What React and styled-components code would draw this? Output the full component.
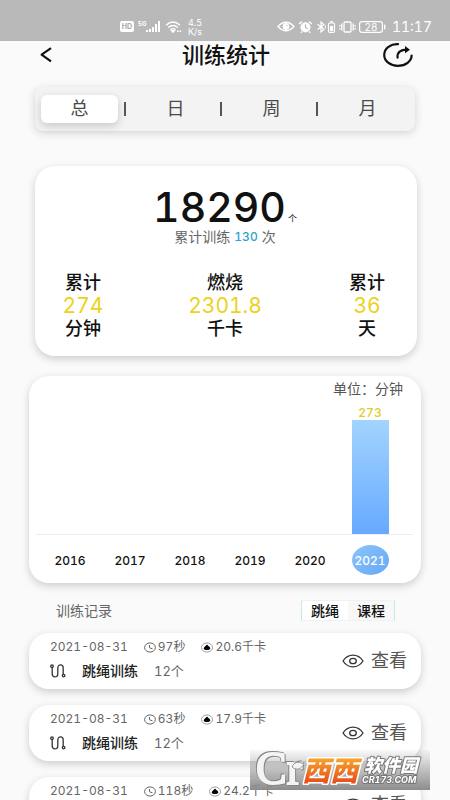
import React, { useState } from "react";
import styled, { createGlobalStyle } from "styled-components";

const GlobalStyle = createGlobalStyle`
  * {
    box-sizing: border-box;
  }
  body {
    margin: 0;
    background: #fafafa;
    color: #111;
    font-family: Inter, "Noto Sans CJK SC", sans-serif;
    font-variant-numeric: tabular-nums;
  }
  button {
    padding: 0;
    border: none;
    background: none;
    color: inherit;
    font-family: inherit;
    font-variant-numeric: inherit;
    cursor: pointer;
  }
`;

const Page = styled.div`
  height: 100vh;
  overflow-x: hidden;
  overflow-y: auto;
  scrollbar-width: none;
`;

const StatusBar = styled.div`
  height: 41px;
  padding: 12px 18px 0 120px;
  display: flex;
  justify-content: space-between;
  align-items: center;
  background: #b9b9b9;
  color: #fff;
`;

const StatusGroup = styled.div`
  display: flex;
  align-items: center;
  gap: ${(p) => p.$gap};
`;

const Speed = styled.div`
  margin-left: 2px;
  font-size: 9px;
  line-height: 9px;
  text-align: center;
`;

const Clock = styled.div`
  margin-left: 3px;
  font-size: 14px;
  line-height: 16px;
`;

const Header = styled.header`
  height: 28px;
  padding: 0 37px 0 39px;
  display: grid;
  grid-template-columns: 32px 1fr 32px;
  align-items: center;
`;

const IconButton = styled.button`
  height: 28px;
  display: flex;
  align-items: center;
  justify-content: ${(p) => p.$align};
`;

const Title = styled.h1`
  margin: 0;
  font-size: 22px;
  line-height: 28px;
  font-weight: 500;
  text-align: center;
`;

const Tabs = styled.nav`
  height: 44px;
  margin: 18px 35px 0;
  padding: 0 9px 0 6px;
  display: flex;
  align-items: center;
  background: #f3f3f3;
  border-radius: 8px;
  box-shadow: 0 2px 8px rgba(0, 0, 0, 0.16);
`;

const Tab = styled.button`
  flex: 1;
  height: 28px;
  border-radius: 6px;
  color: #4a4a4a;
  font-size: 18px;
  line-height: 28px;
  background: ${(p) => (p.$active ? "#fff" : "transparent")};
  box-shadow: ${(p) => (p.$active ? "0 3px 8px rgba(0, 0, 0, 0.18)" : "none")};
`;

const TabDivider = styled.span`
  width: 2px;
  height: 14px;
  margin: 0 11px 0 6px;
  background: #555;
`;

const Card = styled.section`
  background: #fff;
  border-radius: 20px;
  box-shadow: 0 3px 8px rgba(0, 0, 0, 0.18);
`;

const SummaryCard = styled(Card)`
  margin: 35px 33px 0 35px;
  padding: 19px 14px 16px 12px;
`;

const Total = styled.div`
  display: flex;
  justify-content: center;
  align-items: baseline;
  gap: 2px;
  font-size: 41px;
  line-height: 44px;
  font-weight: 500;
`;

const TotalUnit = styled.span`
  font-size: 9px;
  line-height: 12px;
  font-weight: 400;
`;

const Sessions = styled.div`
  margin-top: 1px;
  display: flex;
  justify-content: center;
  gap: 4px;
  color: #666;
  font-size: 14px;
  line-height: 14px;
`;

const SessionCount = styled.span`
  color: #2aa5cb;
  font-size: 12px;
  font-weight: 500;
`;

const Stats = styled.div`
  margin-top: 27px;
  display: flex;
  justify-content: space-between;
`;

const Stat = styled.div`
  width: 72px;
  display: flex;
  flex-direction: column;
  align-items: center;
  font-size: 18px;
  line-height: 23px;
  font-weight: 500;
`;

const StatValue = styled.span`
  color: #ecd21c;
  font-size: 21px;
  font-weight: 400;
`;

const ChartCard = styled(Card)`
  margin: 20px 29px 0;
  padding: 3px 8px 8px 7px;
`;

const ChartUnit = styled.div`
  padding-right: 10px;
  color: #555;
  font-size: 14px;
  line-height: 20px;
  text-align: right;
`;

const Plot = styled.div`
  height: 136px;
  padding: 0 13px 0 4px;
  display: flex;
  border-bottom: 1px solid #eee;
`;

const Column = styled.div`
  flex: 1;
  display: flex;
  flex-direction: column;
  justify-content: flex-end;
  align-items: center;
`;

const BarValue = styled.span`
  color: #e3cc22;
  font-size: 12px;
  line-height: 15px;
  font-weight: 500;
`;

const Bar = styled.div`
  width: 37px;
  background: linear-gradient(#a3d4ff, #66a9ff);
`;

const Years = styled.div`
  padding: 10px 13px 0 4px;
  display: flex;
`;

const YearCell = styled.div`
  flex: 1;
  display: flex;
  justify-content: center;
`;

const Year = styled.button`
  width: 37px;
  height: 30px;
  border-radius: 50%;
  font-size: 12px;
  font-weight: 500;
  color: ${(p) => (p.$active ? "#fff" : "#111")};
  background: ${(p) =>
    p.$active ? "linear-gradient(135deg, #8cc4fa, #64a8f6)" : "transparent"};
`;

const RecordsHeader = styled.div`
  margin: 17px 55px 12px 56px;
  display: flex;
  justify-content: space-between;
  align-items: center;
`;

const RecordsTitle = styled.h2`
  margin: 0;
  color: #666;
  font-size: 14px;
  line-height: 20px;
  font-weight: 400;
`;

const Filters = styled.div`
  display: flex;
  border: 1px solid #eef3f1;
  border-left-color: #c5ebe0;
  border-right-color: #c5ebe0;
`;

const Filter = styled.button`
  width: 46px;
  height: 19px;
  font-size: 14px;
  line-height: 19px;
  font-weight: 500;
  background: ${(p) => (p.$active ? "#fff" : "#f8f8f8")};
`;

const RecordCard = styled(Card)`
  margin: 0 29px 16px;
  padding: 0 14px 0 21px;
  display: flex;
  justify-content: space-between;
  align-items: center;
`;

const RecordInfo = styled.div`
  padding: 4px 0 8px;
`;

const RecordMeta = styled.div`
  display: flex;
  gap: 16px;
  color: #666;
  font-size: 12px;
  line-height: 20px;
`;

const MetaItem = styled.span`
  display: flex;
  align-items: center;
  gap: 2px;
`;

const RecordDetail = styled.div`
  margin-top: 4px;
  display: flex;
  align-items: center;
  gap: 16px;
  color: #666;
  font-size: 14px;
  line-height: 20px;
`;

const RecordName = styled.span`
  color: #222;
  font-weight: 500;
`;

const RecordCount = styled.span`
  font-size: 13px;
`;

const ViewButton = styled.button`
  display: flex;
  align-items: center;
  gap: 7px;
  color: #555;
  font-size: 18px;
  line-height: 24px;
`;

const Watermark = styled.div`
  position: fixed;
  right: 20px;
  bottom: 10px;
  height: 40px;
  background: linear-gradient(rgba(130, 130, 130, 0.05), #8c8c8c);
`;

const LogoLetters = styled.text`
  font: 46px "Liberation Serif", serif;
  fill: #f4f4f4;
  stroke: #f4f4f4;
  stroke-width: 2px;
  filter: drop-shadow(1px 1px 0 #858585) drop-shadow(-1px -1px 0 #858585);
`;

const HdIcon = () => (
  <svg width="14" height="11" viewBox="0 0 14 11">
    <rect width="14" height="11" rx="2" fill="#fff" />
    <text x="7" y="8" fontSize="7" fontWeight="700" fill="#aaa" textAnchor="middle">
      HD
    </text>
  </svg>
);

const SignalIcon = () => (
  <svg width="23" height="12" viewBox="0 0 23 12" fill="#fff">
    <text x="0" y="5" fontSize="6" fontWeight="700">
      5G
    </text>
    <path d="M8 9h2v2H8zM11 8h2v3h-2zM14 6h2v5h-2zM17 3h2v8h-2zM20 0h2v11h-2z" />
  </svg>
);

const WifiIcon = () => (
  <svg width="17" height="12" viewBox="0 0 17 12" fill="none" stroke="#fff" strokeWidth="1.4">
    <path d="M1 4.2Q8 -2 15 4.2M3.2 6.5Q8 2.4 12.8 6.5M5.4 8.7Q8 6.6 10.6 8.7" />
    <path d="M6.8 9.8L8 11.2 9.2 9.8zM12 10.2h1.6M14.6 10.2h1.6" />
  </svg>
);

const StatusEye = () => (
  <svg width="18" height="11" viewBox="0 0 18 11" fill="none" stroke="#fff">
    <path d="M1 5.5Q9-3 17 5.5 9 14 1 5.5z" strokeWidth="1.3" />
    <circle cx="9" cy="5.5" r="3" fill="#fff" />
    <circle cx="10" cy="4.5" r=".6" fill="#aaa" stroke="none" />
  </svg>
);

const AlarmIcon = () => (
  <svg width="15" height="12" viewBox="0 0 15 12" fill="none" stroke="#fff">
    <circle cx="7.5" cy="6.3" r="4.6" fill="#fff" />
    <path d="M1 3l3-2.4M14 3l-3-2.4M4 10.5l-1.2 1.2M11 10.5l1.2 1.2" strokeWidth="1.5" />
    <path d="M7.5 3.5v3.2l2.3 1" stroke="#aaa" />
  </svg>
);

const BluetoothIcon = () => (
  <svg width="20" height="12" viewBox="0 0 20 12" fill="none" stroke="#fff">
    <path d="M1.5 3.2l6.5 5-3 2.8V1l3 2.6-6.5 5" strokeWidth="1.2" />
    <path d="M9.4 4.4v3" />
    <rect x="12.5" y="2" width="6" height="9.4" rx="1.2" strokeWidth="1.2" />
    <path d="M14 .8h3" strokeWidth="1.4" />
    <path d="M14 5h3v5h-3z" fill="#fff" stroke="none" />
  </svg>
);

const VibrateIcon = () => (
  <svg width="17" height="12" viewBox="0 0 17 12" fill="none" stroke="#fff" strokeWidth="1.3">
    <rect x="5" y="1" width="7" height="10" rx="1" />
    <path d="M2.8 2.5v7M14.2 2.5v7M.8 4v1.5M.8 7v1.5M16.2 4v1.5M16.2 7v1.5" />
  </svg>
);

const BatteryIcon = () => (
  <svg width="27" height="12" viewBox="0 0 27 12">
    <rect x=".6" y=".6" width="22.8" height="10.8" rx="2.4" fill="none" stroke="#fff" strokeWidth="1.2" />
    <rect x="25" y="3.5" width="1.4" height="5" rx=".7" fill="#fff" />
    <text x="12" y="9.5" fontSize="10" fill="#fff" textAnchor="middle">
      28
    </text>
  </svg>
);

const BackIcon = () => (
  <svg width="13" height="16" viewBox="0 0 13 16" fill="none" stroke="#111" strokeWidth="2.2">
    <path d="M12 1.2L2.6 7.6 12 14.4" strokeLinejoin="round" />
  </svg>
);

const ShareIcon = () => (
  <svg width="30" height="24" viewBox="0 0 30 24" fill="none" stroke="#111" strokeWidth="2.2">
    <path d="M15 1.2C8 .8 1.2 5 1.2 12c0 6 6 10.8 13.6 10.8 7.8 0 13.8-4.6 13.8-10.2" strokeLinecap="round" />
    <path d="M14.6 14.6C14 9.2 17.5 6.8 24 6.7" strokeLinecap="round" />
    <path d="M22 3L27 6.7 22 10.2z" fill="#111" stroke="none" />
  </svg>
);

const TimeIcon = () => (
  <svg width="12" height="11" viewBox="0 0 12 11" fill="none" stroke="#666">
    <ellipse cx="6" cy="5.5" rx="5.4" ry="4.6" />
    <path d="M5.5 3v2.8l3 1" />
  </svg>
);

const BurnIcon = () => (
  <svg width="12" height="11" viewBox="0 0 12 11">
    <ellipse cx="6" cy="5.5" rx="5.5" ry="4.6" fill="none" stroke="#888" strokeWidth=".8" />
    <path d="M6 2.4C7 4 9.3 4.7 9.3 6.3 9.3 7.5 8.2 8 7 8H5C3.7 8 2.7 7.5 2.7 6.3 2.7 4.9 5 4 6 2.4z" fill="#000" />
  </svg>
);

const RopeIcon = () => (
  <svg width="16" height="14" viewBox="0 0 16 14" fill="none" stroke="#333" strokeWidth="1.3">
    <circle cx="2" cy="2.2" r="1.3" />
    <path d="M2.2 3.5v6.3C2.2 14 7.8 14 7.8 9.8V4C7.8-.2 13.2 0 13.2 4v6" />
    <circle cx="13.6" cy="11.6" r="1.3" />
  </svg>
);

const EyeIcon = () => (
  <svg width="22" height="14" viewBox="0 0 22 14" fill="none" stroke="#333" strokeWidth="1.3">
    <path d="M1 7C6-.8 16-.8 21 7 16 14.8 6 14.8 1 7z" strokeLinejoin="round" />
    <ellipse cx="11" cy="7" rx="3.3" ry="2.7" />
  </svg>
);

const WatermarkLogo = () => (
  <svg width="180" height="40" viewBox="0 0 180 40">
    <defs>
      <linearGradient id="orange" x1="0" y1="0" x2="0" y2="1">
        <stop offset=".2" stopColor="#f7a92c" />
        <stop offset=".8" stopColor="#e8541c" />
      </linearGradient>
    </defs>
    <LogoLetters x="6" y="34">
      Cr
    </LogoLetters>
    <path d="M42 17c2-5 6-6 12-3-3 5-7 7-12 3z" fill="#f4f4f4" stroke="#858585" strokeWidth=".8" />
    <g
      fontFamily="Noto Sans CJK SC, sans-serif"
      fontStyle="italic"
      fontWeight="900"
      paintOrder="stroke"
      strokeLinejoin="round"
    >
      <text x="52" y="31" fontSize="28" fill="url(#orange)" stroke="#fff" strokeWidth="3">
        西西
      </text>
      <text x="114" y="22" fontSize="18" fill="#fff" stroke="#777" strokeWidth="2">
        软件园
      </text>
    </g>
    <text
      x="112"
      y="33"
      fontSize="9"
      fontStyle="italic"
      fontWeight="700"
      fill="#fff"
      stroke="#777"
      strokeWidth="2"
      paintOrder="stroke"
    >
      CR173.COM
    </text>
  </svg>
);

const tabs = ["总", "日", "周", "月"];

const stats = [
  { label: "累计", value: "274", unit: "分钟" },
  { label: "燃烧", value: "2301.8", unit: "千卡" },
  { label: "累计", value: "36", unit: "天" },
];

const chart = [
  { year: "2016", minutes: 0 },
  { year: "2017", minutes: 0 },
  { year: "2018", minutes: 0 },
  { year: "2019", minutes: 0 },
  { year: "2020", minutes: 0 },
  { year: "2021", minutes: 273 },
];

const records = [
  { date: "2021-08-31", time: "97秒", burn: "20.6千卡", count: "12个" },
  { date: "2021-08-31", time: "63秒", burn: "17.9千卡", count: "12个" },
  { date: "2021-08-31", time: "118秒", burn: "24.2千卡", count: "12个" },
];

const BAR_HEIGHT = 114;
const maxMinutes = Math.max(...chart.map((c) => c.minutes));

const App = () => {
  const [tab, setTab] = useState("总");
  const [year, setYear] = useState("2021");
  const [filter, setFilter] = useState("跳绳");

  return (
    <Page>
      <GlobalStyle />
      <StatusBar>
        <StatusGroup $gap="4px">
          <HdIcon />
          <SignalIcon />
          <WifiIcon />
          <Speed>
            4.5
            <br />
            K/s
          </Speed>
        </StatusGroup>
        <StatusGroup $gap="3px">
          <StatusEye />
          <AlarmIcon />
          <BluetoothIcon />
          <VibrateIcon />
          <BatteryIcon />
          <Clock>11:17</Clock>
        </StatusGroup>
      </StatusBar>

      <Header>
        <IconButton $align="flex-start" aria-label="返回">
          <BackIcon />
        </IconButton>
        <Title>训练统计</Title>
        <IconButton $align="flex-end" aria-label="分享">
          <ShareIcon />
        </IconButton>
      </Header>

      <Tabs>
        {tabs.map((t, i) => (
          <React.Fragment key={t}>
            {i > 0 && <TabDivider />}
            <Tab $active={t === tab} onClick={() => setTab(t)}>
              {t}
            </Tab>
          </React.Fragment>
        ))}
      </Tabs>

      <SummaryCard>
        <Total>
          18290<TotalUnit>个</TotalUnit>
        </Total>
        <Sessions>
          累计训练 <SessionCount>130</SessionCount> 次
        </Sessions>
        <Stats>
          {stats.map((s) => (
            <Stat key={s.value}>
              <span>{s.label}</span>
              <StatValue>{s.value}</StatValue>
              <span>{s.unit}</span>
            </Stat>
          ))}
        </Stats>
      </SummaryCard>

      <ChartCard>
        <ChartUnit>单位：分钟</ChartUnit>
        <Plot>
          {chart.map((c) => (
            <Column key={c.year}>
              {c.minutes > 0 && (
                <>
                  <BarValue>{c.minutes}</BarValue>
                  <Bar style={{ height: (c.minutes / maxMinutes) * BAR_HEIGHT }} />
                </>
              )}
            </Column>
          ))}
        </Plot>
        <Years>
          {chart.map((c) => (
            <YearCell key={c.year}>
              <Year $active={c.year === year} onClick={() => setYear(c.year)}>
                {c.year}
              </Year>
            </YearCell>
          ))}
        </Years>
      </ChartCard>

      <RecordsHeader>
        <RecordsTitle>训练记录</RecordsTitle>
        <Filters>
          {["跳绳", "课程"].map((f) => (
            <Filter key={f} $active={f === filter} onClick={() => setFilter(f)}>
              {f}
            </Filter>
          ))}
        </Filters>
      </RecordsHeader>

      {records.map((r) => (
        <RecordCard key={r.time}>
          <RecordInfo>
            <RecordMeta>
              <span>{r.date}</span>
              <MetaItem>
                <TimeIcon />
                {r.time}
              </MetaItem>
              <MetaItem>
                <BurnIcon />
                {r.burn}
              </MetaItem>
            </RecordMeta>
            <RecordDetail>
              <RopeIcon />
              <RecordName>跳绳训练</RecordName>
              <RecordCount>{r.count}</RecordCount>
            </RecordDetail>
          </RecordInfo>
          <ViewButton>
            <EyeIcon />
            查看
          </ViewButton>
        </RecordCard>
      ))}

      <Watermark>
        <WatermarkLogo />
      </Watermark>
    </Page>
  );
};

export default App;
